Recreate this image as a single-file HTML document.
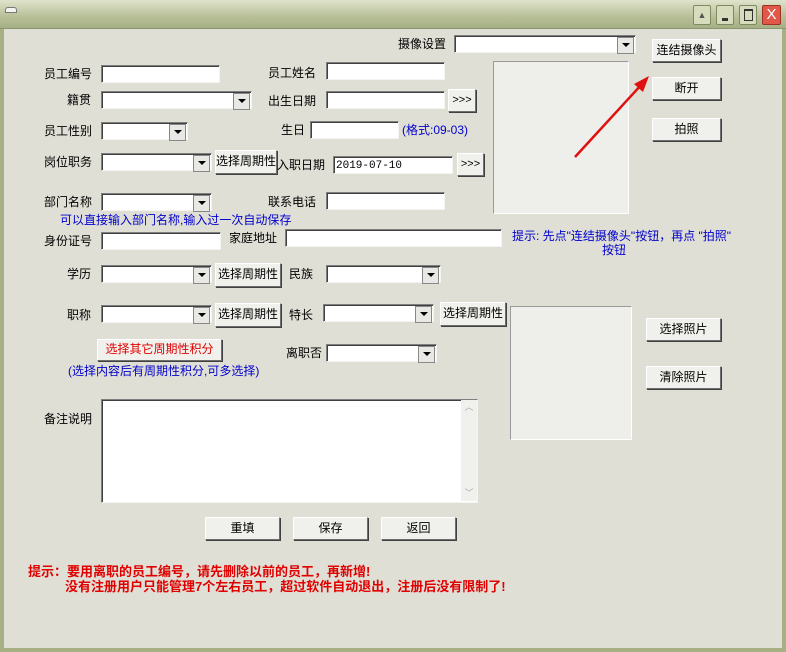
<!DOCTYPE html><html><head><meta charset="utf-8"><style>
*{box-sizing:border-box;margin:0;padding:0}
body{width:786px;height:652px;overflow:hidden;background:#e0dfd6;font-family:"Liberation Sans","Noto Sans CJK SC","WenQuanYi Zen Hei",sans-serif;font-size:12px;color:#000;position:relative}
.a{position:absolute;white-space:nowrap;line-height:14px}
.in{position:absolute;background:#fff;border:1px solid;border-color:#7f7f7f #f4f4f0 #f4f4f0 #7f7f7f;box-shadow:inset 1px 1px 0 #404040;height:19px;font-size:11px;padding:3px 2px;font-family:"Liberation Mono","DejaVu Sans Mono",monospace}
.cb::after{content:"";position:absolute;right:1px;top:1px;width:15px;height:15px;background:#e8e8e4;border:1px solid #888;}
.cb::before{content:"";position:absolute;right:5px;top:7px;border:4px solid transparent;border-top:4px solid #000;border-bottom:0;z-index:2}
.bt{position:absolute;background:#f0f0ec;border:1px solid;border-color:#fff #6e6e6e #6e6e6e #fff;box-shadow:1px 1px 0 #404040;text-align:center;line-height:20px;height:23px}
.blue{color:#0000cc}
.red{color:#e00000;font-weight:bold;font-size:13px}
.box{position:absolute;background:#eeeeea;border:1px solid;border-color:#9a9a9a #fff #fff #9a9a9a}
</style></head><body>
<div style="position:absolute;left:0;top:0;width:786px;height:29px;background:linear-gradient(#dfe3cc,#b7bf98 60%,#a6b084);border-bottom:1px solid #8a9670"></div>
<div style="position:absolute;left:5px;top:7px;width:12px;height:6px;border:1px solid #777;border-radius:3px 3px 0 0;background:#f4f4ee"></div>
<div style="position:absolute;left:693px;top:5px;width:18px;height:20px;background:#d6dcbc;border:1px solid #7f8a62;border-radius:2px;font-size:9px;text-align:center;line-height:18px;color:#555">▲</div>
<div style="position:absolute;left:716px;top:5px;width:18px;height:20px;background:#d6dcbc;border:1px solid #7f8a62;border-radius:2px"><div style="position:absolute;left:5px;top:12px;width:6px;height:3px;background:#333"></div></div>
<div style="position:absolute;left:739px;top:5px;width:18px;height:20px;background:#d6dcbc;border:1px solid #7f8a62;border-radius:2px"><div style="position:absolute;left:4px;top:3px;width:9px;height:12px;border:1px solid #333;border-top-width:2px"></div></div>
<div style="position:absolute;left:762px;top:5px;width:19px;height:20px;background:#e0584a;border:1px solid #a03020;border-radius:2px;color:#fff;font-size:15px;text-align:center;line-height:18px">X</div>
<div style="position:absolute;left:0;top:29px;width:4px;height:623px;background:#a6b084"></div>
<div style="position:absolute;right:0;top:29px;width:4px;height:623px;background:#a6b084"></div>
<div style="position:absolute;left:0;bottom:0;width:786px;height:4px;background:#a6b084"></div>

<div class="a" style="left:398px;top:37px">摄像设置</div><div class="in cb" style="left:454px;top:35px;width:182px;height:18px"></div>
<div class="bt" style="left:652px;top:39px;width:69px">连结摄像头</div>
<div class="bt" style="left:652px;top:77px;width:69px">断开</div>
<div class="bt" style="left:652px;top:118px;width:69px">拍照</div>
<div class="box" style="left:493px;top:61px;width:136px;height:153px"></div>
<svg style="position:absolute;left:570px;top:72px" width="85" height="92"><line x1="5" y1="85" x2="72" y2="12" stroke="#e01010" stroke-width="2.5"/><polygon points="79,4 64,12 73,20" fill="#e01010"/></svg>

<div class="a" style="left:44px;top:67px">员工编号</div><div class="in" style="left:101px;top:65px;width:119px;height:18px"></div>
<div class="a" style="left:268px;top:66px">员工姓名</div><div class="in" style="left:326px;top:62px;width:119px;height:18px"></div>
<div class="a" style="left:67px;top:93px">籍贯</div><div class="in cb" style="left:101px;top:91px;width:151px;height:18px"></div>
<div class="a" style="left:268px;top:94px">出生日期</div><div class="in" style="left:326px;top:91px;width:119px;height:18px"></div>
<div class="bt" style="left:448px;top:89px;width:28px;height:23px;font-size:11px">&gt;&gt;&gt;</div>
<div class="a" style="left:44px;top:124px">员工性别</div><div class="in cb" style="left:101px;top:122px;width:87px;height:18px"></div>
<div class="a" style="left:281px;top:123px">生日</div><div class="in" style="left:310px;top:121px;width:89px;height:18px"></div>
<div class="a blue" style="left:402px;top:123px">(格式:09-03)</div>
<div class="a" style="left:44px;top:155px">岗位职务</div><div class="in cb" style="left:101px;top:153px;width:111px;height:18px"></div>
<div class="bt" style="left:215px;top:150px;width:62px;height:24px">选择周期性</div>
<div class="a" style="left:277px;top:158px">入职日期</div><div class="in" style="left:333px;top:156px;width:120px;height:18px">2019-07-10</div>
<div class="bt" style="left:457px;top:153px;width:27px;height:23px;font-size:11px">&gt;&gt;&gt;</div>
<div class="a" style="left:44px;top:195px">部门名称</div><div class="in cb" style="left:101px;top:193px;width:111px;height:18px"></div>
<div class="a" style="left:268px;top:195px">联系电话</div><div class="in" style="left:326px;top:192px;width:119px;height:18px"></div>
<div class="a blue" style="left:60px;top:213px">可以直接输入部门名称,输入过一次自动保存</div>
<div class="a" style="left:44px;top:234px">身份证号</div><div class="in" style="left:101px;top:232px;width:120px;height:18px"></div>
<div class="a" style="left:229px;top:231px">家庭地址</div><div class="in" style="left:285px;top:229px;width:217px;height:18px"></div>
<div class="a blue" style="left:512px;top:229px">提示: 先点"连结摄像头"按钮，再点 "拍照"</div>
<div class="a blue" style="left:602px;top:243px">按钮</div>
<div class="a" style="left:67px;top:267px">学历</div><div class="in cb" style="left:101px;top:265px;width:111px;height:18px"></div>
<div class="bt" style="left:215px;top:263px;width:66px;height:24px">选择周期性</div>
<div class="a" style="left:289px;top:267px">民族</div><div class="in cb" style="left:326px;top:265px;width:115px;height:18px"></div>
<div class="a" style="left:67px;top:308px">职称</div><div class="in cb" style="left:101px;top:305px;width:111px;height:18px"></div>
<div class="bt" style="left:215px;top:303px;width:66px;height:24px">选择周期性</div>
<div class="a" style="left:289px;top:308px">特长</div><div class="in cb" style="left:323px;top:304px;width:111px;height:18px"></div>
<div class="bt" style="left:440px;top:302px;width:66px;height:24px">选择周期性</div>
<div class="box" style="left:510px;top:306px;width:122px;height:134px"></div>
<div class="bt" style="left:646px;top:318px;width:75px">选择照片</div>
<div class="bt" style="left:646px;top:366px;width:75px">清除照片</div>
<div class="bt" style="left:97px;top:339px;width:125px;height:22px;color:#e00000;line-height:19px">选择其它周期性积分</div>
<div class="a" style="left:286px;top:346px">离职否</div><div class="in cb" style="left:326px;top:344px;width:111px;height:18px"></div>
<div class="a blue" style="left:68px;top:364px">(选择内容后有周期性积分,可多选择)</div>
<div class="a" style="left:44px;top:412px">备注说明</div>
<div class="in" style="left:101px;top:399px;width:377px;height:104px"><div style="position:absolute;right:0;top:0;width:16px;height:101px;background:#f0f0ec;color:#aaa;font-size:9px;text-align:center">︿<div style="position:absolute;bottom:2px;width:16px">﹀</div></div></div>
<div class="bt" style="left:205px;top:517px;width:75px">重填</div>
<div class="bt" style="left:293px;top:517px;width:75px">保存</div>
<div class="bt" style="left:381px;top:517px;width:75px">返回</div>
<div class="a red" style="left:28px;top:565px">提示：要用离职的员工编号，请先删除以前的员工，再新增!</div>
<div class="a red" style="left:65px;top:580px">没有注册用户只能管理7个左右员工，超过软件自动退出，注册后没有限制了!</div>
</body></html>
